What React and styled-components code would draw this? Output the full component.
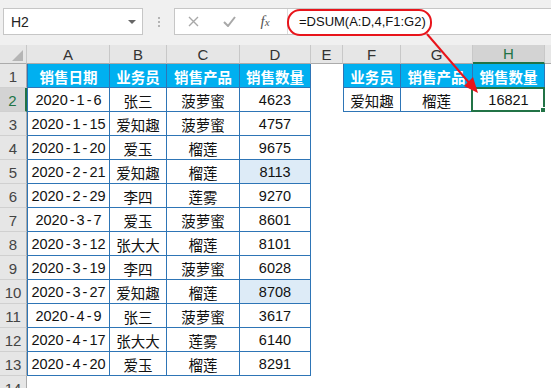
import React from "react";
import styled, { createGlobalStyle } from "styled-components";

const GlobalStyle = createGlobalStyle`
  html, body {
    margin: 0;
    padding: 0;
    background: #fff;
  }
  body {
    width: 551px;
    height: 388px;
    overflow: hidden;
    font-family: "Liberation Sans", Arial, sans-serif;
  }
`;

const blue = "#2e75b6";
const green = "#217346";

const Page = styled.div`
  position: relative;
  width: 551px;
  height: 388px;
  overflow: hidden;
  background: #fff;
`;

const Toolbar = styled.div`
  height: 45px;
  box-sizing: border-box;
  padding: 8px 0 0 3px;
  background: #f0f0f0;
  display: flex;
  align-items: flex-start;
`;

const NameBox = styled.div`
  width: 140px;
  height: 27px;
  box-sizing: border-box;
  border: 1px solid #c6c6c6;
  background: #fff;
  display: flex;
  align-items: center;
  justify-content: space-between;
  padding: 0 6px 0 7px;
  font-size: 14px;
  color: #222;
`;

const Caret = styled.span`
  width: 0;
  height: 0;
  border-left: 4px solid transparent;
  border-right: 4px solid transparent;
  border-top: 4px solid #666;
`;

const Dots = styled.div`
  width: 31px;
  height: 27px;
  display: flex;
  flex-direction: column;
  align-items: center;
  justify-content: center;
  gap: 2px;
  span {
    width: 2px;
    height: 2px;
    background: #b4b4b4;
  }
`;

const FormulaBox = styled.div`
  flex: 1;
  height: 27px;
  box-sizing: border-box;
  border: 1px solid #c6c6c6;
  border-right: none;
  background: #fff;
  display: flex;
  align-items: stretch;
`;

const IconArea = styled.div`
  width: 112px;
  display: flex;
  border-right: 1px solid #dcdcdc;
`;

const IconSlot = styled.div`
  width: 36px;
  display: flex;
  align-items: center;
  justify-content: center;
  color: #a8a8a8;
`;

const Fx = styled.span`
  font-family: "Liberation Serif", "Times New Roman", serif;
  font-style: italic;
  font-size: 15px;
  color: #555;
  small {
    font-size: 11px;
  }
`;

const FormulaText = styled.div`
  padding-left: 11px;
  display: flex;
  align-items: center;
  font-size: 13px;
  color: #111;
`;

const SheetGrid = styled.div`
  display: grid;
  grid-template-columns: 27px 83px 57px 73px 71px 32px 58px 72px 72px 30px;
  grid-template-rows: 19px repeat(14, 24px);
`;

const Corner = styled.div`
  position: relative;
  background: #e6e6e6;
  border-right: 1px solid #c8c8c8;
  border-bottom: 1px solid #ababab;
  box-sizing: border-box;
  &::after {
    content: "";
    position: absolute;
    right: 3px;
    bottom: 2px;
    width: 0;
    height: 0;
    border-left: 11px solid transparent;
    border-bottom: 11px solid #b5b5b5;
  }
`;

const ColHead = styled.div`
  box-sizing: border-box;
  background: ${({ $active }) => ($active ? "#d3d3d3" : "#e6e6e6")};
  color: ${({ $active }) => ($active ? green : "#333")};
  border-right: 1px solid #c8c8c8;
  border-bottom: ${({ $active }) => ($active ? `2px solid ${green}` : "1px solid #ababab")};
  display: flex;
  align-items: center;
  justify-content: center;
  font-size: 15px;
`;

const RowHead = styled.div`
  box-sizing: border-box;
  background: ${({ $active }) => ($active ? "#d3d3d3" : "#e6e6e6")};
  color: ${({ $active }) => ($active ? green : "#444")};
  border-right: ${({ $active }) => ($active ? `2px solid ${green}` : "1px solid #ababab")};
  border-bottom: 1px solid #d0d0d0;
  display: flex;
  align-items: center;
  justify-content: center;
  padding-top: 2px;
  font-size: 15px;
`;

const Cell = styled.div`
  position: relative;
  box-sizing: border-box;
  display: flex;
  align-items: center;
  justify-content: center;
  padding-top: 1px;
  white-space: nowrap;
  font-family: "Liberation Sans", "Noto Sans CJK SC", sans-serif;
  font-size: 14.5px;
  color: #111;
  background: ${({ $head, $hl }) => ($head ? "#00b0f0" : $hl ? "#ddebf7" : "#fff")};
  ${({ $head }) => $head && "color: #fff; font-weight: bold;"}
  ${({ $boxed }) => $boxed && `border-right: 1px solid ${blue}; border-bottom: 1px solid ${blue};`}
  ${({ $left }) => $left && `border-left: 1px solid ${blue};`}
`;

const Dash = styled.span`
  padding: 0 2px;
`;

const Selection = styled.div`
  position: absolute;
  top: -1px;
  left: -2px;
  right: -1px;
  bottom: -1px;
  border: 2px solid ${green};
  pointer-events: none;
`;

const Handle = styled.div`
  position: absolute;
  right: -4px;
  bottom: -4px;
  width: 5px;
  height: 5px;
  background: ${green};
  border: 1px solid #fff;
`;

const Annotation = styled.svg`
  position: absolute;
  top: 0;
  left: 0;
  pointer-events: none;
`;

// the last column only peeks in at the right edge, so its letter is off screen
const columns = [
  { key: "A", label: "A" },
  { key: "B", label: "B" },
  { key: "C", label: "C" },
  { key: "D", label: "D" },
  { key: "E", label: "E" },
  { key: "F", label: "F" },
  { key: "G", label: "G" },
  { key: "H", label: "H" },
  { key: "I", label: "" },
];

const sales = [
  ["2020-1-6", "张三", "菠萝蜜", "4623"],
  ["2020-1-15", "爱知趣", "菠萝蜜", "4757"],
  ["2020-1-20", "爱玉", "榴莲", "9675"],
  ["2020-2-21", "爱知趣", "榴莲", "8113", true],
  ["2020-2-29", "李四", "莲雾", "9270"],
  ["2020-3-7", "爱玉", "菠萝蜜", "8601"],
  ["2020-3-12", "张大大", "榴莲", "8101"],
  ["2020-3-19", "李四", "菠萝蜜", "6028"],
  ["2020-3-27", "爱知趣", "榴莲", "8708", true],
  ["2020-4-9", "张三", "菠萝蜜", "3617"],
  ["2020-4-17", "张大大", "莲雾", "6140"],
  ["2020-4-20", "爱玉", "榴莲", "8291"],
];

const criteria = [
  ["业务员", "销售产品", "销售数量"],
  ["爱知趣", "榴莲", "16821"],
];

function DateText({ value }) {
  const parts = value.split("-");
  return (
    <span>
      {parts.map((p, i) => (
        <React.Fragment key={i}>
          {i > 0 && <Dash>-</Dash>}
          {p}
        </React.Fragment>
      ))}
    </span>
  );
}

// what sits in a given cell: row r (1-based), column c (0 = A)
function cellAt(r, c) {
  if (c <= 3 && r <= 13) {
    if (r === 1) return { text: ["销售日期", "业务员", "销售产品", "销售数量"][c], head: true, boxed: true, left: c === 0 };
    const row = sales[r - 2];
    return { text: row[c], date: c === 0, hl: c === 3 && row[4], boxed: true, left: c === 0 };
  }
  if (c >= 5 && c <= 7 && r <= 2) {
    return { text: criteria[r - 1][c - 5], head: r === 1, boxed: true, left: c === 5, selected: r === 2 && c === 7 };
  }
  return { text: "" };
}

export default function App() {
  const rows = Array.from({ length: 14 }, (_, i) => i + 1);
  return (
    <Page>
      <GlobalStyle />
      <Toolbar>
        <NameBox>
          H2
          <Caret />
        </NameBox>
        <Dots>
          <span />
          <span />
          <span />
        </Dots>
        <FormulaBox>
          <IconArea>
            <IconSlot>
              <svg width="11" height="11" viewBox="0 0 11 11">
                <path d="M1 1 L10 10 M10 1 L1 10" stroke="currentColor" strokeWidth="1.4" />
              </svg>
            </IconSlot>
            <IconSlot>
              <svg width="13" height="11" viewBox="0 0 13 11">
                <path d="M1 6 L5 10 L12 1" stroke="currentColor" strokeWidth="2" fill="none" />
              </svg>
            </IconSlot>
            <IconSlot>
              <Fx>
                f<small>x</small>
              </Fx>
            </IconSlot>
          </IconArea>
          <FormulaText>=DSUM(A:D,4,F1:G2)</FormulaText>
        </FormulaBox>
      </Toolbar>

      <SheetGrid>
        <Corner />
        {columns.map((col) => (
          <ColHead key={col.key} $active={col.key === "H"}>
            {col.label}
          </ColHead>
        ))}
        {rows.map((r) => (
          <React.Fragment key={r}>
            <RowHead $active={r === 2}>{r}</RowHead>
            {columns.map((col, c) => {
              const info = cellAt(r, c);
              return (
                <Cell key={col.key} $head={info.head} $hl={info.hl} $boxed={info.boxed} $left={info.left}>
                  {info.date ? <DateText value={info.text} /> : info.text}
                  {info.selected && (
                    <Selection>
                      <Handle />
                    </Selection>
                  )}
                </Cell>
              );
            })}
          </React.Fragment>
        ))}
      </SheetGrid>

      <Annotation width="551" height="388" viewBox="0 0 551 388">
        <rect x="288" y="10" width="143" height="25" rx="12" ry="12" fill="none" stroke="#e8141b" strokeWidth="2" />
        <line x1="427" y1="34" x2="471" y2="85" stroke="#e8141b" strokeWidth="2" />
        <path d="M478 93 L464 86 L473 77 Z" fill="#e8141b" />
      </Annotation>
    </Page>
  );
}
